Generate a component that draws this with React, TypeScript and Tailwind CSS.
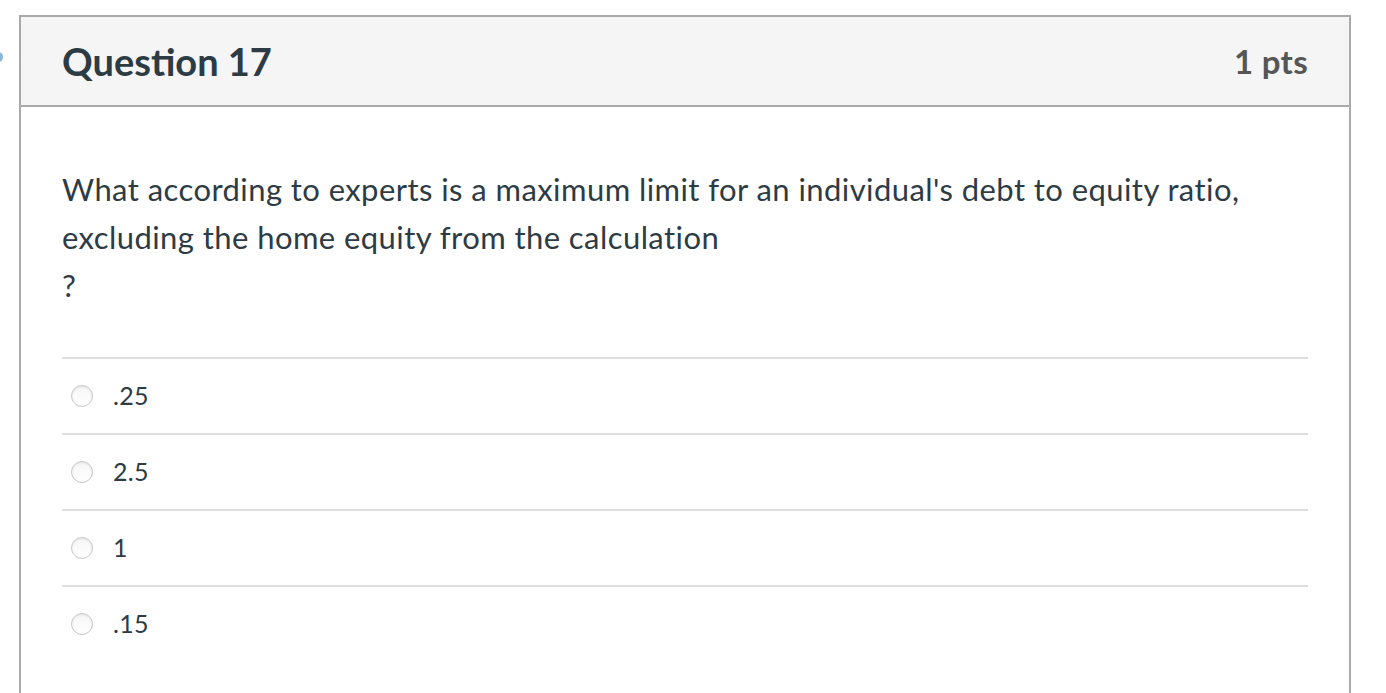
import React from "react";

const answers = [".25", "2.5", "1", ".15"];

export default function App() {
  return (
    <div className="relative w-[1386px] h-[693px] overflow-hidden bg-white" style={{ fontFamily: "Lato, 'Noto Sans', sans-serif" }}>
      <div className="absolute left-[-6px] top-[52px] w-[9px] h-[10px] rounded-full bg-[#8fb8d6]" />
      <div className="ml-[19px] mt-[15px] w-[1332px] border-2 border-b-0 border-[#aaaaaa] h-[700px]">
        <div className="h-[90px] bg-[#f5f5f5] border-b-2 border-[#aaaaaa] flex items-center justify-between pl-[41px] pr-[41px]">
          <div className="text-[38px] font-bold text-[#2d3b45] leading-none">Question 17</div>
          <div className="text-[33px] tracking-[0.3px] font-bold text-[#565656] leading-none">1 pts</div>
        </div>
        <div className="px-[41px] pt-[58px]">
          <div className="text-[31px] tracking-[0.43px] leading-[48px] text-[#2d3b45]">
            <div>What according to experts is a maximum limit for an individual's debt to equity ratio,</div>
            <div>excluding the home equity from the calculation</div>
            <div>?</div>
          </div>
          <div className="mt-[48px]">
            {answers.map((a) => (
              <div key={a} className="border-t-2 border-[#dddddd] h-[76px] flex items-center">
                <div className="ml-[9px] w-[22px] h-[22px] rounded-full border border-[#c8c8c8] bg-gradient-to-b from-[#f6f6f6] to-white shadow-[inset_0_1px_2px_rgba(0,0,0,0.08)]" />
                <div className="ml-[20px] text-[25px] tracking-[0.3px] text-[#2d3b45]">{a}</div>
              </div>
            ))}
          </div>
        </div>
      </div>
    </div>
  );
}
